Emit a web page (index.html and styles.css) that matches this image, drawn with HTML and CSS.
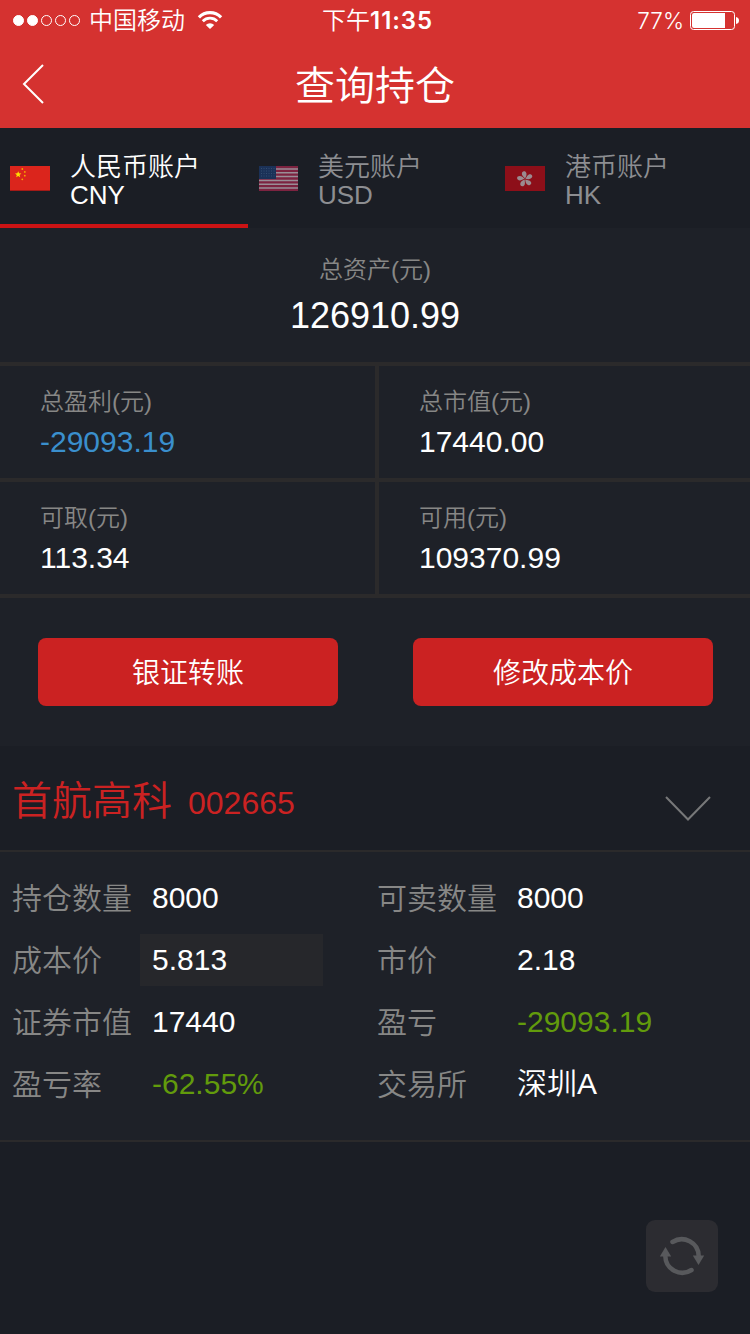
FILE: index.html
```html
<!DOCTYPE html>
<html lang="zh-CN">
<head>
    <meta charset="UTF-8">
    <title>查询持仓</title>
    <link rel="stylesheet" href="styles.css">
</head>
<body>
    <div class="header">
        <div class="status">
            <div class="status-left">
                <ul class="signal">
                    <li class="on"></li>
                    <li class="on"></li>
                    <li></li>
                    <li></li>
                    <li></li>
                </ul>
                <span class="carrier">中国移动</span>
                <svg class="wifi" width="26" height="20" viewBox="0 0 26 20">
                    <path d="M1.9 7.3A15.6 15.6 0 0 1 24.1 7.3" fill="none" stroke="#fff" stroke-width="3.2"/>
                    <path d="M5.8 11.2A10 10 0 0 1 20.2 11.2" fill="none" stroke="#fff" stroke-width="2.8"/>
                    <path d="M8.8 15A6 6 0 0 1 17.2 15L13 19Z" fill="#fff"/>
                </svg>
            </div>
            <div class="time">下午<b>11:35</b></div>
            <div class="status-right">
                <span>77%</span>
                <svg width="50" height="20" viewBox="0 0 50 20">
                    <rect x="0.5" y="1.5" width="44" height="18" rx="3" fill="none" stroke="#fff"/>
                    <path d="M4 3H35V18H4Q2 18 2 16V5Q2 3 4 3Z" fill="#fff"/>
                    <path d="M46 7Q49 7.500 49 10.500T46 14Z" fill="#fff"/>
                </svg>
            </div>
        </div>
        <div class="nav">
            <svg class="back" width="24" height="42" viewBox="0 0 24 42">
                <path d="M21 2L2 21L21 40" fill="none" stroke="#fff" stroke-width="2"/>
            </svg>
            <h1>查询持仓</h1>
        </div>
    </div>

    <ul class="tabs">
        <li class="active">
            <svg class="flag" width="40" height="25" viewBox="0 0 40 25">
                <rect width="40" height="25" fill="#db251c"/>
                <path d="M8.200 5.200L9.100 7.300L11.400 7.500L9.600 9L10.200 11.300L8.200 10.100L6.200 11.300L6.800 9L5 7.500L7.300 7.300Z" fill="#ffde00"/>
                <circle cx="12.300" cy="3" r="0.900" fill="#f5a800"/>
                <circle cx="14.800" cy="5.900" r="0.900" fill="#f5a800"/>
                <circle cx="14.800" cy="9.700" r="0.900" fill="#f5a800"/>
                <circle cx="12.300" cy="13.300" r="0.900" fill="#f5a800"/>
                <rect y="24" width="40" height="1" fill="#a31a17"/>
            </svg>
            <p>人民币账户<br>CNY</p>
        </li>
        <li>
            <svg class="flag" width="40" height="25" viewBox="0 0 40 25">
                <rect x="1" width="39" height="25" fill="#7c2340"/>
                <path d="M1 2.900H40M1 6.700H40M1 10.500H40M1 14.400H40M1 18.200H40M1 22H40" stroke="#998d96" stroke-width="1.500"/>
                <rect x="1" width="17" height="13" fill="#1b3157"/>
                <path d="M3 2.500H17M3 5H17M3 7.500H17M3 10H17" stroke="#334d70" stroke-width="1" stroke-dasharray="1 1.500"/>
            </svg>
            <p>美元账户<br>USD</p>
        </li>
        <li>
            <svg class="flag" width="40" height="25" viewBox="0 0 40 25">
                <rect width="40" height="25" fill="#8d0f19"/>
                <g fill="#9b8b90">
                    <path id="petal" d="M20 12.500C18.500 10.500 16 9 17.200 6.200C18 5 19 5 20 5.300C22.300 7 21.800 10 20 12.500Z"/>
                    <use href="#petal" transform="rotate(72 20 13)"/>
                    <use href="#petal" transform="rotate(144 20 13)"/>
                    <use href="#petal" transform="rotate(216 20 13)"/>
                    <use href="#petal" transform="rotate(288 20 13)"/>
                </g>
            </svg>
            <p>港币账户<br>HK</p>
        </li>
    </ul>

    <div class="total">
        <p class="label">总资产(元)</p>
        <p class="num">126910.99</p>
    </div>

    <ul class="assets">
        <li>
            <p class="label">总盈利(元)</p>
            <p class="num blue">-29093.19</p>
        </li>
        <li>
            <p class="label">总市值(元)</p>
            <p class="num">17440.00</p>
        </li>
        <li>
            <p class="label">可取(元)</p>
            <p class="num">113.34</p>
        </li>
        <li>
            <p class="label">可用(元)</p>
            <p class="num">109370.99</p>
        </li>
    </ul>

    <div class="btns">
        <a class="btn">银证转账</a>
        <a class="btn">修改成本价</a>
    </div>

    <div class="stock">
        <span class="name">首航高科</span>
        <span class="code">002665</span>
        <svg class="arrow" width="48" height="28" viewBox="0 0 48 28">
            <path d="M2 2L24 24.500L46 2" fill="none" stroke="#777879" stroke-width="2"/>
        </svg>
    </div>

    <ul class="detail">
        <li><span>持仓数量</span><em>8000</em></li>
        <li><span>可卖数量</span><em>8000</em></li>
        <li><span>成本价</span><em class="edit">5.813</em></li>
        <li><span>市价</span><em>2.18</em></li>
        <li><span>证券市值</span><em>17440</em></li>
        <li><span>盈亏</span><em class="green">-29093.19</em></li>
        <li><span>盈亏率</span><em class="green">-62.55%</em></li>
        <li><span>交易所</span><em>深圳A</em></li>
    </ul>

    <div class="refresh">
        <svg width="48" height="44" viewBox="0 0 48 44">
            <g id="half">
                <path d="M14.500 8A17 17 0 0 1 40.700 22" fill="none" stroke="#58595c" stroke-width="4.500" stroke-linecap="round"/>
                <path d="M34.800 21.500H46.200L40.500 31Z" fill="#58595c"/>
            </g>
            <use href="#half" transform="rotate(180 24 22)"/>
        </svg>
    </div>
</body>
</html>
```
FILE: styles.css
```css
*{
    margin: 0;
    padding: 0;
    box-sizing: border-box;
}
body{
    width: 750px;
    height: 1334px;
    overflow: hidden;
    background-color: #1b1e25;
    color: #fff;
    font-family: "Liberation Sans", "Noto Sans CJK SC", sans-serif;
    font-weight: 350;
}
ul{
    list-style-type: none;
}
svg{
    display: block;
}
.header{
    height: 128px;
    background-color: #d53230;
}
.status{
    height: 40px;
    padding: 0 10px 0 13px;
    display: grid;
    grid-template-columns: 1fr auto 1fr;
    align-items: center;
    font-family: Inter, "Noto Sans CJK SC", sans-serif;
    font-size: 24px;
    line-height: 42px;
}
.status-left,
.status-right,
.signal{
    display: flex;
    align-items: center;
}
.signal{
    gap: 3px;
}
.signal li{
    width: 11px;
    height: 11px;
    border: 1px solid #fff;
    border-radius: 50%;
}
.signal .on{
    background-color: #fff;
}
.signal,
.status svg{
    margin-bottom: 2px;
}
.carrier{
    margin-left: 9px;
}
.wifi{
    margin-left: 12px;
}
.time{
    padding-left: 2px;
}
.time b{
    font-weight: 600;
    letter-spacing: 0.9px;
}
.status-right{
    justify-content: flex-end;
    gap: 6px;
    font-size: 22.5px;
}
.nav{
    height: 88px;
    padding-left: 22px;
    padding-right: 46px;
    display: flex;
    align-items: center;
}
.nav h1{
    flex: 1;
    padding-bottom: 3px;
    text-align: center;
    font-size: 40px;
    font-weight: 350;
}
.tabs{
    height: 100px;
    display: grid;
    grid-template-columns: 248px 247px 255px;
}
.tabs li{
    padding: 26px 0 0 10px;
    display: flex;
    color: #8d8e92;
    font-size: 26px;
    line-height: 27.5px;
}
.tabs .active{
    color: #fff;
    border-bottom: 4px solid #cb1314;
}
.flag{
    margin: 12px 20px 0 0;
}
.label{
    color: #878786;
    font-size: 24px;
    line-height: 36px;
}
.total{
    height: 134px;
    padding-top: 24px;
    background-color: #1e2128;
    text-align: center;
}
.total .num{
    font-size: 36px;
    line-height: 56px;
}
.assets{
    display: grid;
    grid-template-columns: 375px 371px;
    grid-auto-rows: 112px;
    gap: 4px;
    padding: 4px 0;
    background-color: #2b2a2b;
}
.assets li{
    padding: 18px 0 0 40px;
    background-color: #1e2128;
}
.assets .num{
    font-size: 30px;
    line-height: 44px;
}
.assets .blue{
    color: #3a8fcd;
}
.btns{
    height: 148px;
    padding: 40px 37px 0 38px;
    display: flex;
    justify-content: space-between;
    background-color: #1e2128;
}
.btn{
    width: 300px;
    height: 68px;
    border-radius: 8px;
    background-color: #cb2222;
    text-align: center;
    font-size: 28px;
    line-height: 72px;
}
.stock{
    height: 106px;
    padding: 0 38px 0 12px;
    display: flex;
    align-items: center;
    border-bottom: 2px solid #2b2a2b;
    color: #cb2222;
}
.name{
    font-size: 40px;
}
.code{
    margin-left: 16px;
    padding-top: 10px;
    font-size: 32px;
}
.arrow{
    margin-left: auto;
    margin-top: 22px;
}
.detail{
    height: 290px;
    padding: 15px 0 0 12px;
    display: grid;
    grid-template-columns: 365px 1fr;
    grid-auto-rows: 62px;
    background-color: #1e2128;
    border-bottom: 2px solid #2b2a2b;
    font-size: 30px;
}
.detail li{
    display: flex;
    align-items: center;
}
.detail span{
    width: 128px;
    padding-bottom: 5px;
    color: #878786;
}
.detail em{
    width: 183px;
    height: 52px;
    padding-left: 12px;
    font-style: normal;
    line-height: 52px;
}
.detail .edit{
    background-color: #26272b;
}
.detail .green{
    color: #629b0c;
}
.refresh{
    width: 72px;
    height: 72px;
    margin: 78px 32px 0 auto;
    display: flex;
    align-items: center;
    justify-content: center;
    border-radius: 9px;
    background-color: #2c2c31;
}
```
